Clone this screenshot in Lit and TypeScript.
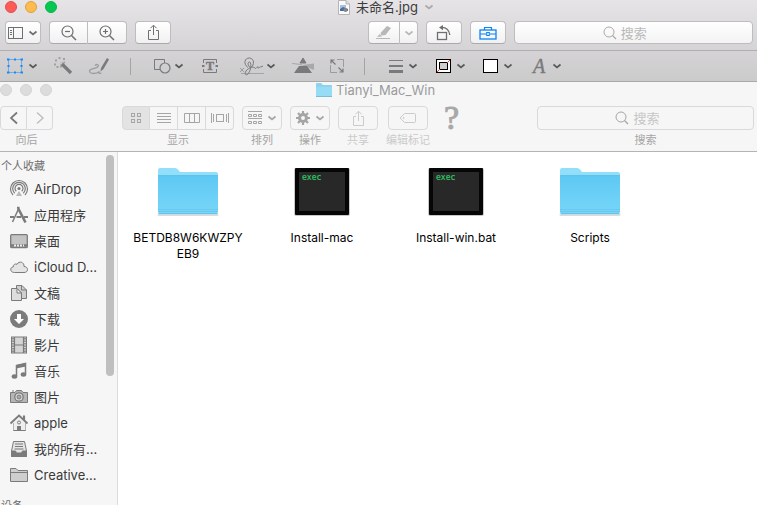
import { LitElement, html, svg, css, nothing, type TemplateResult } from "lit";
import { customElement } from "lit/decorators.js";

const icon = (w: number, h: number, body: unknown) =>
  html`<svg width=${w} height=${h} viewBox="0 0 ${w} ${h}" fill="none" stroke="currentColor" aria-hidden="true">${body}</svg>`;

const chevron = icon(10, 8, svg`<path d="M1.500 2.500L5 5.500L8.500 2.500" stroke-width="1.700"/>`);

const magnifier = icon(14, 14, svg`<circle cx="6" cy="6" r="5"/><path d="M9.500 9.500L13 13" stroke-width="1.200"/>`);

const share = (h: number) => icon(13, h, svg`<path d="M4 6.500H1.500V15.500H11.500V6.500H9M6.500 11V1.500M3.500 4.200L6.500 1.200L9.500 4.200"/>`);

const preview = {
  sidebar: icon(15, 12, svg`<rect x=".5" y=".5" width="14" height="11"/><path d="M5.500 1V11"/><path d="M2 3.500H4M2 5.500H4M2 7.500H4"/>`),
  zoomOut: icon(16, 16, svg`<circle cx="6.500" cy="6.500" r="5.500" stroke-width="1.200"/><path d="M10.500 10.500L15 15" stroke-width="1.500"/><path d="M4 6.500H9" stroke-width="1.200"/>`),
  zoomIn: icon(16, 16, svg`<circle cx="6.500" cy="6.500" r="5.500" stroke-width="1.200"/><path d="M10.500 10.500L15 15" stroke-width="1.500"/><path d="M4 6.500H9M6.500 4V9" stroke-width="1.200"/>`),
  marker: icon(16, 14, svg`<path d="M4.500 7L11 0L15 2L9.500 9L5.500 9.500Z" fill="currentColor" stroke="none"/><path d="M3.800 8L6 10.500L1 11Z" fill="currentColor" stroke="none"/><path d="M0 12.500H14"/>`),
  rotate: icon(16, 16, svg`<rect x="1.500" y="7.500" width="9" height="7" stroke-width="1.300"/><path d="M5 2.500C10 2 13.500 5 13.800 10" stroke-width="1.300"/><path d="M7 0V5.200L3 2.600Z" fill="currentColor" stroke="none"/>`),
  toolbox: icon(18, 14, svg`<rect x="1" y="4" width="16" height="9" stroke-width="1.300"/><path d="M5.500 4V1.500H12.500V4M1 8H7.500M10.500 8H17" stroke-width="1.200"/><rect x="7.700" y="6.500" width="2.600" height="3"/>`),
};

const markup = {
  select: icon(16, 16, svg`<rect x="1.500" y="1.500" width="13" height="13" stroke="#168bf5" stroke-dasharray="1 1"/><path d="M0 1.500H2.500M0 14.500H2.500M7 1.500H9M7 14.500H9M13.500 1.500H16M13.500 14.500H16M0.500 8H2.500M13.500 8H15.500" stroke="#168bf5" stroke-width="2"/>`),
  wand: icon(18, 18, svg`<path d="M7.500 6.500L17 16" stroke-width="3.200"/><path d="M6.200 5.200L8 7" stroke="#c8c7c8" stroke-width="2"/><path d="M4.500 1H6.500M9 2H11M1 3.500H3M0 7.500H2M2.500 10H4.500M6 9.500H8M9.500 5.500H11" stroke-width="1.800" opacity=".55"/>`),
  sketch: icon(22, 18, svg`<path d="M7 8.500C9 6.500 11.500 8 9.500 10C7 12 1.500 11.500 1.500 14C2 17.500 8.500 17 11.500 14.500C10 16 11 17 13.500 16" stroke-width="1.300" opacity=".6"/><path d="M19 1L21 2.500L15.500 12L12.500 14.500L13 11Z" fill="currentColor" stroke="none"/>`),
  shapes: icon(18, 16, svg`<path d="M9 11.500H3.500V1.500H13.500V5"/><circle cx="14" cy="10" r="5" stroke-width="1.200"/>`),
  text: icon(24, 16, svg`<path d="M3.500 5V1.500H16.500V5M16.500 11V14.500H3.500V11" stroke-width="1"/><path d="M2 8H4.500M15.500 8H18" stroke-width="2"/><text x="10" y="12" text-anchor="middle" font-family="Liberation Serif" font-size="12" font-weight="700" fill="currentColor" stroke-width=".5">T</text>`),
  sign: icon(21, 18, svg`<path d="M0 11L4 15M4 11L0 15" opacity=".6"/><path d="M1 16.500H24" opacity=".5"/><path d="M8 10.500C3 7 4.500 .8 9.500 1C14.500 1.500 14.500 8 11 10.500C8.500 10.500 7 6 9 5C12 4 11 14 8 17C6 19 4 17 6 14C9 10.500 13 9 15 11C16 13 18 8 18 10C18 13 20 9 21 10L23 9"/>`),
  prism: icon(22, 18, svg`<path d="M11 1L14 6H8Z" fill="currentColor"/><path d="M7 9L15 9L20 16H2Z" fill="currentColor" stroke="none"/><path d="M0 6L10 8L22 6.500V13L12 9Z" fill="currentColor" stroke="none" opacity=".45"/><path d="M0 6.500L10 7.500" stroke="#aaa"/>`),
  adjust: icon(14, 16, svg`<path d="M7 1.500H13.500V9M.5 7V14.500H7" opacity=".6"/><path d="M1 2L5.500 6.500M13 14L8.500 9.500M1 5.500V2H4.500M13 10.500V14H9.500" stroke-width="1.200"/>`),
  lines: icon(18, 16, svg`<path d="M4 2.500H18"/><path d="M4 8H18" stroke-width="2"/><path d="M4 13.500H18" stroke-width="3"/>`),
  border: icon(17, 16, svg`<rect x="2.500" y="1.500" width="14" height="13" fill="#fff" stroke="#000"/><rect x="5.500" y="4.500" width="8" height="7" fill="#d0cfd0" stroke="#000"/><path d="M3 14L6 11M13 5L16 2" stroke="#f04040"/>`),
  fill: icon(16, 16, svg`<rect x="1.500" y="1.500" width="14" height="13" fill="#fff" stroke="#000"/>`),
  font: icon(18, 18, svg`<text x="4" y="16" font-family="Liberation Serif" font-size="20" font-style="italic" fill="currentColor" stroke-width=".4">A</text>`),
};

const finder = {
  back: icon(10, 14, svg`<path d="M8 1.500L2 7L8 12.500" stroke-width="1.700"/>`),
  forward: icon(10, 14, svg`<path d="M2 1.500L8 7L2 12.500" stroke-width="1.400"/>`),
  grid: icon(12, 12, svg`<rect x="1.500" y="1.500" width="3" height="3"/><rect x="7.500" y="1.500" width="3" height="3"/><rect x="1.500" y="7.500" width="3" height="3"/><rect x="7.500" y="7.500" width="3" height="3"/>`),
  list: icon(14, 12, svg`<path d="M0 1.500H14M0 4.500H14M0 7.500H14M0 10.500H14"/>`),
  columns: icon(16, 12, svg`<path d="M.5 1.500H15.500V10.500H.5ZM5.500 1.500V10.500M10.500 1.500V10.500"/>`),
  flow: icon(18, 12, svg`<rect x="5.500" y="2.500" width="7" height="7"/><path d="M.5 1V11M2.500 2V10M15.500 2V10M17.500 1V11"/>`),
  arrange: icon(14, 14, svg`<path d="M0 .5H14M0 7.500H14"/><path d="M.5 3.500H3.500V5.500H.5ZM5.500 3.500H8.500V5.500H5.500ZM10.500 3.500H13.500V5.500H10.500ZM.5 10.500H3.500V12.500H.5ZM5.500 10.500H8.500V12.500H5.500ZM10.500 10.500H13.500V12.500H10.500Z"/>`),
  gear: icon(14, 14, svg`<circle cx="7" cy="7" r="3.500" stroke-width="3"/><path d="M7 0V3M7 11V14M0 7H3M11 7H14M2 2L4.200 4.200M9.800 9.800L12 12M12 2L9.800 4.200M4.200 9.800L2 12" stroke-width="2.200"/>`),
  tag: icon(18, 12, svg`<path d="M5.500 1.500H15.500Q16.500 1.500 16.500 2.500V9.500Q16.500 10.500 15.500 10.500H5.500L1 6Z"/><circle cx="4.500" cy="6" r=".6"/>`),
};

const smallFolder = html`<svg width="16" height="14" viewBox="0 0 16 14" aria-hidden="true"><path d="M0 1Q0 0 1 0H5L7 2H15Q16 2 16 3V13H0Z" fill="#8ed2ec"/><path d="M0 4H16V13Q16 14 15 14H1Q0 14 0 13Z" fill="#97dcf6"/><path d="M0 13.500H16" stroke="#7cbdd6"/></svg>`;

const docIcon = html`<svg width="12" height="15" viewBox="0 0 12 15" aria-hidden="true"><path d="M.5 .5H8L11.500 4V14.500H.5Z" fill="#fafafa" stroke="#b5b5b8"/><path d="M8 .5V4H11.500" fill="#ddd" stroke="#b5b5b8"/><path d="M2 5H8V9H2Z" fill="#a5c0e2"/><path d="M2 9L5 7L10 9V11H2Z" fill="#4d6f9f"/><circle cx="7.500" cy="10" r="2" fill="#8d8584"/></svg>`;

const places: { name: string; art: TemplateResult }[] = [
  { name: "AirDrop", art: icon(18, 18, svg`<circle cx="9" cy="8.500" r="1.600" fill="currentColor" stroke="none"/><path d="M6.300 11.300A4 4 0 1 1 11.700 11.300M4.700 13.200A6.300 6.300 0 1 1 13.300 13.200M3 15A8.500 8.500 0 1 1 15 15" stroke-width="1.200"/><path d="M9 11L12 16H6Z" fill="currentColor" stroke="none" opacity=".5"/>`) },
  { name: "应用程序", art: icon(18, 18, svg`<path d="M8.500 3L2.500 16" stroke-width="1.500"/><path d="M8 2L15.500 16.500" stroke-width="2.600"/><path d="M0 11H4M6.500 11H11M14 11H18" stroke-width="2"/><path d="M7 1.500H9.500" stroke-width="1.500"/>`) },
  { name: "桌面", art: icon(18, 18, svg`<rect x=".7" y="2.700" width="16.600" height="13" rx="1" fill="#c4c4c4" stroke-width="1.300"/><path d="M1 13.500H17" stroke-width="2.500"/><path d="M4 13.500H14" stroke="#eee" stroke-width="2" stroke-dasharray="2 1"/>`) },
  { name: "iCloud D...", art: icon(18, 18, svg`<path d="M4.500 14.500C1.500 14.500 .5 12.500 .8 11C1 9.500 2.200 9 3.200 9C3 6.500 5.500 5.300 7 6.300C9 2.500 14.500 4 14 8.500C16 8.500 17.500 9.700 17.500 11.500C17.500 13.500 16 14.500 14 14.500Z" fill="#e4e4e4"/>`) },
  { name: "文稿", art: icon(18, 18, svg`<path d="M6.500 1.500H12L16.500 6V14.500H6.500Z" fill="#cfcfcf"/><path d="M11.500 1.500V6H16.500"/><path d="M1.500 4.500H7L11.500 9V16.500H1.500Z" fill="#ddd"/><path d="M7 4.500V9H11.500Z" fill="#f4f4f4"/>`) },
  { name: "下载", art: icon(18, 18, svg`<circle cx="9" cy="9" r="9" fill="currentColor" stroke="none"/><path d="M7 4H11V9H14L9 14L4 9H7Z" fill="#fff" stroke="none"/>`) },
  { name: "影片", art: icon(18, 18, svg`<rect x="1.500" y="1" width="15" height="16" fill="#d5d5d5"/><path d="M4.500 1V17M13.500 1V17M4.500 9H13.500" stroke-width="1.200"/><path d="M3 2V16M15 2V16" stroke-dasharray="1.500 1" stroke-width="1.500"/>`) },
  { name: "音乐", art: icon(18, 18, svg`<path d="M6.500 14V3.500L15.500 1.500V12" stroke-width="1.500"/><path d="M6 3L16 1V4.500L6 6.500Z" fill="currentColor" stroke="none"/><ellipse cx="4.500" cy="14.500" rx="2.800" ry="2.200" fill="currentColor" stroke="none"/><ellipse cx="13.500" cy="12.500" rx="2.800" ry="2.200" fill="currentColor" stroke="none"/>`) },
  { name: "图片", art: icon(18, 18, svg`<path d="M.5 4.500H5L6.500 2.500H11.500L13 4.500H17.500V14.500H.5Z" fill="#b5b5b5"/><circle cx="9" cy="9" r="4.200" fill="#ddd" stroke-width="1.300"/><circle cx="9" cy="9" r="2" fill="#aaa"/><path d="M2 3H4"/>`) },
  { name: "apple", art: icon(18, 18, svg`<path d="M3.500 9V16.500H15.500V9" fill="#eee"/><path d="M3.500 9L9 3.500L15.500 9V16H3.500Z" fill="#eee" stroke="none"/><path d="M.5 9.500L9 1.500L17.500 9.500" stroke-width="1.800"/><path d="M14 1.500V6" stroke-width="2.200"/><path d="M7 12H11V17H7Z" fill="currentColor" stroke="none"/><circle cx="9" cy="8.500" r="1.500"/>`) },
  { name: "我的所有...", art: icon(18, 18, svg`<path d="M3.500 1.500H14.500L16.500 11V16.500H1.500V11Z" fill="#e4e4e4"/><path d="M1.500 11H5.500L6.500 13H11.500L12.500 11H16.500V16.500H1.500Z" fill="currentColor"/><path d="M5 4H13M5 6.500H13M4.500 9H13.500"/>`) },
  { name: "Creative...", art: icon(18, 18, svg`<path d="M.5 2.500H6L8 4.500H17.500V15.500H.5Z" fill="#cecece"/><path d="M.5 6.500H17.500"/>`) },
];

const folderArt = html`<svg width="64" height="52" viewBox="0 0 64 52" aria-hidden="true">
  <defs><linearGradient id="front" x1="0" y1="0" x2="0" y2="1"><stop offset="0" stop-color="#5dc8f3"/><stop offset="1" stop-color="#78d6f9"/></linearGradient></defs>
  <path d="M3 47.500H61" stroke="#d5dde0" stroke-width="3" stroke-linecap="round"/>
  <path d="M2 3Q2 1 4 1H19Q21 1 22 2.500L24 5H60Q62 5 62 7V20H2Z" fill="#91dffb"/>
  <path d="M2 9Q2 8 3 8H61Q62 8 62 9V45Q62 47 60 47H4Q2 47 2 45Z" fill="url(#front)"/>
  <path d="M2 8.500H62M2 42.500H62M2 44.500H62" stroke="#5fc0e6" stroke-width=".6"/><path d="M3 46.600H61" stroke="#5fbbdf" stroke-width=".8"/>
</svg>`;

const execArt = html`<svg width="64" height="52" viewBox="0 0 64 52" aria-hidden="true">
  <rect x="4" y="1" width="56" height="48" rx="2" fill="#c9c9c9"/>
  <rect x="5" y="1" width="54" height="47" rx="1" fill="#060606"/>
  <rect x="9" y="5" width="46" height="39" fill="#282828"/>
  <text x="12" y="13" font-family="DejaVu Sans Mono, monospace" font-size="8" fill="#2fc765" stroke="#2fc765" stroke-width=".2">exec</text>
</svg>`;

const files = [
  { name: "BETDB8W6KWZPYEB9", art: folderArt },
  { name: "Install-mac", art: execArt },
  { name: "Install-win.bat", art: execArt },
  { name: "Scripts", art: folderArt },
];

const base = css`
  * { box-sizing: border-box; }
  svg { display: block; flex: none; overflow: visible; }
  button { display: flex; align-items: center; justify-content: center; margin: 0; padding: 0; border: 0; background: none; color: inherit; font: inherit; }
  .titlebar { display: flex; align-items: center; }
  .lights { display: flex; gap: 8px; flex: 1; }
  .light { width: 12px; height: 12px; border-radius: 50%; border: 1px solid #d4d4d4; background: #dcdcdc; }
  .title { display: flex; align-items: center; gap: 6px; margin: 0; font-size: 13px; line-height: 16px; font-weight: 400; }
  .balance { flex: 1; }
  .toolbar { display: flex; }
  .spacer { flex: 1; }
  .btn { height: 24px; border: 1px solid #bdbcbe; border-radius: 4px; gap: 5px; }
  .search { display: grid; grid-template-columns: 37% 14px 1fr; align-items: center; height: 24px; border: 1px solid #bdbcbe; border-radius: 4px; }
  .search input { min-width: 0; width: 100%; margin: 0; padding: 0 0 0 4px; border: 0; outline: 0; background: none; font: inherit; font-size: 13px; }
`;

@customElement("preview-window")
export class PreviewWindow extends LitElement {
  static styles = [base, css`
    :host { display: block; color: #6f6e70; background: linear-gradient(#e6e4e6, #d5d3d5 50px, #cccbcc); border-bottom: 1px solid #aaa9aa; }
    .titlebar { height: 21px; padding: 0 0 7px 5px; }
    .light.close { background: #fc5b57; border-color: #e2504c; }
    .light.min { background: #fdbc4e; border-color: #dfa03a; }
    .light.zoom { background: #04c84f; border-color: #0db24a; }
    .title { color: #3c3c3c; }
    .title svg:last-child { color: #aaa; }
    .balance { flex-basis: 0; margin-right: 2px; }
    .lights { flex-basis: 12px; }
    .toolbar { height: 30px; padding: 0 4px 0 5px; border-bottom: 1px solid #b0afb0; gap: 8px; align-items: flex-start; }
    .btn, .search { height: 23px; }
    .btn { background: linear-gradient(#fff, #f1f1f1); border-bottom-color: #aaa; }
    .w36 { width: 36px; }
    .pair { display: flex; }
    .pair .btn { width: 39px; }
    .pair .btn:first-child { border-radius: 4px 0 0 4px; }
    .pair .btn:last-child { border-radius: 0 4px 4px 0; border-left: 0; }
    .pair .pen { width: 32px; color: #b8b8b8; }
    .pair .more { width: 18px; color: #b8b8b8; }
    .w36.active { color: #0a84f6; }
    .search { width: 239px; background: linear-gradient(#fff, #f3f3f3); color: #aaa; }
    .search input::placeholder { color: #b9b9b9; opacity: 1; }
    .markup { display: flex; align-items: center; gap: 16px; height: 30px; padding-left: 7px; }
    .tool { gap: 5px; height: 24px; color: #7a797b; }
    .tool .chev { color: #59585a; }
    .chev { display: block; }
    .rule { width: 9px; height: 17px; display: flex; justify-content: center; }
    .rule::before { content: ""; width: 1px; background: #a5a4a5; }
  `];

  private tool(label: string, art: TemplateResult, menu = false) {
    return html`<button class="tool" aria-label=${label}>${art}${menu ? html`<span class="chev">${chevron}</span>` : nothing}</button>`;
  }

  render() {
    return html`
      <header class="titlebar">
        <div class="lights"><button class="light close" aria-label="关闭"></button><button class="light min" aria-label="最小化"></button><button class="light zoom" aria-label="缩放"></button></div>
        <h1 class="title">${docIcon}<span>未命名.jpg</span>${chevron}</h1>
        <div class="balance"></div>
      </header>
      <div class="toolbar">
        <button class="btn w36" aria-label="边栏">${preview.sidebar}${chevron}</button>
        <div class="pair"><button class="btn" aria-label="缩小">${preview.zoomOut}</button><button class="btn" aria-label="放大">${preview.zoomIn}</button></div>
        <button class="btn w36" aria-label="共享">${share(17)}</button>
        <div class="spacer"></div>
        <div class="pair"><button class="btn pen" aria-label="高亮">${preview.marker}</button><button class="btn more" aria-label="高亮颜色">${chevron}</button></div>
        <button class="btn w36" aria-label="旋转">${preview.rotate}</button>
        <button class="btn w36 active" aria-label="标记">${preview.toolbox}</button>
        <label class="search"><span></span>${magnifier}<input type="text" placeholder="搜索" aria-label="搜索" /></label>
      </div>
      <div class="markup">
        ${this.tool("选择", markup.select, true)}
        ${this.tool("即时 Alpha", markup.wand)}
        ${this.tool("速绘", markup.sketch)}
        <span class="rule"></span>
        ${this.tool("形状", markup.shapes, true)}
        ${this.tool("文本", markup.text)}
        ${this.tool("签名", markup.sign, true)}
        ${this.tool("调整颜色", markup.prism)}
        ${this.tool("调整大小", markup.adjust)}
        <span class="rule"></span>
        ${this.tool("线条", markup.lines, true)}
        ${this.tool("边框颜色", markup.border, true)}
        ${this.tool("填充颜色", markup.fill, true)}
        ${this.tool("字体", markup.font, true)}
      </div>`;
  }
}

@customElement("finder-window")
export class FinderWindow extends LitElement {
  static styles = [base, css`
    :host { display: flex; flex-direction: column; background: #f6f6f6; color: #a5a5a5; }
    .titlebar { height: 24px; padding-bottom: 8px; }
    .lights { flex-basis: 0; }
    .title { color: #9b9b9b; gap: 4px; }
    .balance { margin-right: 6px; }
    .toolbar { height: 46px; padding-right: 3px; border-bottom: 1px solid #b4b4b4; font-size: 11px; line-height: 16px; align-items: flex-start; }
    .group { display: flex; flex-direction: column; align-items: center; gap: 2px; margin-right: 8px; white-space: nowrap; }
    .seg { display: flex; }
    .btn { border-color: #d9d9d9; }
    .group > .btn { width: 40px; }
    .seg .btn { width: 28px; border-radius: 0; border-left-width: 0; }
    .seg .btn:first-child { border-left-width: 1px; border-radius: 4px 0 0 4px; }
    .seg .btn:last-child { border-radius: 0 4px 4px 0; }
    .nav { margin-right: 69px; }
    .nav .btn { width: 26px; }
    .nav .btn:first-child { width: 27px; color: #777; }
    .nav .btn:last-child { color: #bdbdbd; }
    .seg .btn[aria-pressed="true"] { background: #e3e3e3; }
    .off { color: #cbcbcb; }
    .help { margin-left: 6px; height: 24px; color: #a8a8a8; font: 400 34px/24px "Liberation Serif", serif; -webkit-text-stroke: 1px #a8a8a8; }
    .find { margin-right: 0; }
    .search { width: 217px; grid-template-columns: 36% 14px 1fr; border-color: #d9d9d9; }
    .search input::placeholder { color: #c6c6c6; opacity: 1; }
    .body { display: flex; flex: 1; min-height: 0; }
    .sidebar { display: flex; width: 118px; border-right: 1px solid #dcdcdc; overflow: hidden; color: #3a3a3a; }
    .places { flex: 1; min-width: 0; }
    .heading { margin: 0; padding: 6px 0 2px 1px; font-size: 11px; line-height: 16px; font-weight: 400; color: #6e6e6e; }
    .list { margin: 0 0 4px; padding: 0; list-style: none; }
    .place { display: flex; align-items: center; gap: 6px; height: 26px; padding-left: 10px; color: inherit; text-decoration: none; font-size: 13px; line-height: 18px; white-space: nowrap; }
    .place svg { color: #7b7b7b; }
    .thumb { width: 8px; height: 221px; margin: 3px 3px 0 0; border-radius: 4px; background: #bfbfbf; flex: none; }
    .files { flex: 1; display: flex; flex-wrap: wrap; align-content: flex-start; gap: 22px; margin: 0; padding: 15px 0 0 14px; list-style: none; background: #fff; color: #000; }
    .file { width: 112px; display: flex; flex-direction: column; align-items: center; gap: 11px; font-size: 12px; line-height: 16px; }
    .name { width: 100%; text-align: center; overflow-wrap: anywhere; }
  `];

  render() {
    return html`
      <header class="titlebar">
        <div class="lights"><button class="light" aria-label="关闭"></button><button class="light" aria-label="最小化"></button><button class="light" aria-label="缩放"></button></div>
        <h2 class="title">${smallFolder}<span>Tianyi_Mac_Win</span></h2>
        <div class="balance"></div>
      </header>
      <div class="toolbar">
        <div class="group nav"><div class="seg"><button class="btn" aria-label="后退">${finder.back}</button><button class="btn" aria-label="前进">${finder.forward}</button></div><span>向后</span></div>
        <div class="group"><div class="seg">
          <button class="btn" aria-label="图标" aria-pressed="true">${finder.grid}</button><button class="btn" aria-label="列表">${finder.list}</button><button class="btn" aria-label="分栏">${finder.columns}</button><button class="btn" aria-label="Cover Flow">${finder.flow}</button>
        </div><span>显示</span></div>
        <div class="group"><button class="btn" aria-label="排列">${finder.arrange}${chevron}</button><span>排列</span></div>
        <div class="group"><button class="btn" aria-label="操作">${finder.gear}${chevron}</button><span>操作</span></div>
        <div class="group off"><button class="btn" aria-label="共享">${share(17)}</button><span>共享</span></div>
        <div class="group off"><button class="btn" aria-label="编辑标记">${finder.tag}</button><span>编辑标记</span></div>
        <button class="help" aria-label="帮助">?</button>
        <div class="spacer"></div>
        <div class="group find"><label class="search" for="find"><span></span>${magnifier}<input id="find" type="text" placeholder="搜索" /></label><span>搜索</span></div>
      </div>
      <div class="body">
        <nav class="sidebar">
          <div class="places">
            <h3 class="heading">个人收藏</h3>
            <ul class="list">${places.map((p) => html`<li><a class="place" href="#">${p.art}<span>${p.name}</span></a></li>`)}</ul>
            <h3 class="heading">设备</h3>
          </div>
          <div class="thumb"></div>
        </nav>
        <ul class="files">${files.map((f) => html`<li class="file">${f.art}<span class="name">${f.name}</span></li>`)}</ul>
      </div>`;
  }
}

@customElement("app-root")
export class AppRoot extends LitElement {
  static styles = css`
    :host { display: flex; flex-direction: column; height: 100vh; overflow: hidden; font-family: Inter, "Noto Sans CJK SC", sans-serif; }
    finder-window { flex: 1; min-height: 0; }
  `;

  render() {
    return html`<preview-window></preview-window><finder-window></finder-window>`;
  }
}
